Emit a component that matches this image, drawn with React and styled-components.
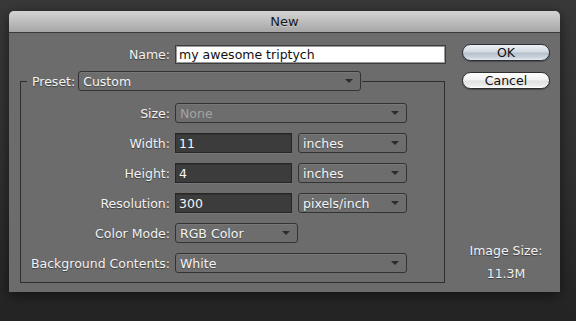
import React from 'react';
import styled, { createGlobalStyle } from 'styled-components';

const Global = createGlobalStyle`
  html, body { margin: 0; padding: 0; }
  body {
    width: 576px;
    height: 321px;
    overflow: hidden;
    background: linear-gradient(180deg, #393939 0%, #303030 55%, #242424 100%);
    font-family: "DejaVu Sans", "Liberation Sans", sans-serif;
  }
`;

const Page = styled.div`
  padding: 11px 0 0 9px;
`;

const Dialog = styled.div`
  width: 551px;
  height: 281px;
  display: flex;
  flex-direction: column;
  background: #6c6c6c;
  border-radius: 5px 5px 0 0;
  box-shadow: 0 3px 14px rgba(0, 0, 0, 0.55);
  overflow: hidden;
`;

const TitleBar = styled.div`
  height: 21px;
  flex: none;
  border-bottom: 1px solid #3a3a3a;
  background: linear-gradient(180deg, #d4d4d4 0%, #bdbdbd 50%, #a6a6a6 100%);
  display: flex;
  align-items: center;
  justify-content: center;
  font-size: 13px;
  color: #151515;
  text-shadow: 0 1px 0 rgba(255, 255, 255, 0.35);
`;

const Body = styled.div`
  flex: 1;
  display: flex;
  gap: 16px;
  padding: 11px 10px 10px 11px;
`;

const LeftColumn = styled.div`
  width: 426px;
  display: flex;
  flex-direction: column;
`;

const Row = styled.div`
  display: flex;
  align-items: center;
  height: 20px;
`;

const Pair = styled.div`
  display: flex;
  align-items: center;
  gap: 6px;
`;

const Label = styled.span`
  width: ${p => p.$width}px;
  margin-right: 5px;
  flex: none;
  text-align: right;
  font-size: 12.5px;
  color: #f3f3f3;
  text-shadow: 0 1px 1px rgba(0, 0, 0, 0.45);
  white-space: nowrap;
`;

const TextField = styled.div`
  box-sizing: border-box;
  width: ${p => p.$width}px;
  height: ${p => (p.$light ? 19 : 20)}px;
  padding-left: 3px;
  display: flex;
  align-items: center;
  font-size: 12.5px;
  border: 1px solid ${p => (p.$light ? '#3c3c3c' : '#262626')};
  background: ${p => (p.$light ? '#ffffff' : '#3c3c3c')};
  color: ${p => (p.$light ? '#111' : '#f5f5f5')};
  box-shadow: ${p =>
    p.$light
      ? 'inset 0 0 0 1px #9a9a9a'
      : 'inset 0 1px 0 #303030, 0 1px 0 rgba(255,255,255,0.08)'};
  white-space: nowrap;
`;

const Select = styled.div`
  position: relative;
  box-sizing: border-box;
  width: ${p => p.$width}px;
  height: 20px;
  padding-left: 4px;
  display: flex;
  align-items: center;
  font-size: 12.5px;
  border: 1px solid #333;
  border-radius: 3px;
  background: #6d6d6d;
  box-shadow: inset 0 1px 0 rgba(255, 255, 255, 0.07);
  color: ${p => (p.$disabled ? '#a3a3a3' : '#f5f5f5')};
  text-shadow: ${p => (p.$disabled ? 'none' : '0 1px 1px rgba(0,0,0,0.35)')};
  white-space: nowrap;

  &::after {
    content: '';
    position: absolute;
    right: 7px;
    top: 7px;
    border-left: 4px solid transparent;
    border-right: 4px solid transparent;
    border-top: 4px solid #2c2c2c;
  }
`;

const Group = styled.fieldset`
  box-sizing: border-box;
  width: 425px;
  margin: 7px 0 0 0;
  padding: 12px 0 9px 0;
  border: 1px solid #2e2e2e;
  display: flex;
  flex-direction: column;
  gap: 10px;
  min-width: 0;
`;

const Legend = styled.legend`
  margin-left: 6px;
  padding: 0 1px 0 5px;
  height: 20px;
  display: flex;
  align-items: center;
  gap: 3px;
`;

const LegendText = styled.span`
  font-size: 12.5px;
  color: #f3f3f3;
  text-shadow: 0 1px 1px rgba(0, 0, 0, 0.45);
`;

const RightColumn = styled.div`
  width: 88px;
  display: flex;
  flex-direction: column;
  gap: 11px;
`;

const Button = styled.button`
  box-sizing: border-box;
  width: 88px;
  height: 17px;
  padding: 0;
  border-radius: 9px;
  border: 1px solid ${p => (p.$primary ? '#29303a' : '#2e2e2e')};
  font-family: inherit;
  font-size: 12.5px;
  line-height: 15px;
  color: #111;
  background: ${p =>
    p.$primary
      ? 'linear-gradient(180deg, #eef2f6 0%, #d3dae2 45%, #b7c1cc 55%, #cdd5de 85%, #e6ebf0 100%)'
      : 'linear-gradient(180deg, #ffffff 0%, #f2f2f2 45%, #e0e0e0 55%, #ececec 85%, #ffffff 100%)'};
  box-shadow: 0 1px 1px rgba(0, 0, 0, 0.3);
`;

const ImageSize = styled.div`
  margin-top: auto;
  padding-bottom: 1px;
  display: flex;
  flex-direction: column;
  align-items: center;
  gap: 7px;
  font-size: 12.5px;
  line-height: 16px;
  color: #f3f3f3;
  text-shadow: 0 1px 1px rgba(0, 0, 0, 0.45);
`;

export default function App() {
  return (
    <>
      <Global />
      <Page>
        <Dialog>
          <TitleBar>New</TitleBar>
          <Body>
            <LeftColumn>
              <Row>
                <Label $width={150}>Name:</Label>
                <TextField $light $width={271}>my awesome triptych</TextField>
              </Row>
              <Group>
                <Legend>
                  <LegendText>Preset:</LegendText>
                  <Select $width={283}>Custom</Select>
                </Legend>
                <Row>
                  <Label $width={149}>Size:</Label>
                  <Select $disabled $width={232}>None</Select>
                </Row>
                <Row>
                  <Label $width={149}>Width:</Label>
                  <Pair>
                    <TextField $width={117}>11</TextField>
                    <Select $width={109}>inches</Select>
                  </Pair>
                </Row>
                <Row>
                  <Label $width={149}>Height:</Label>
                  <Pair>
                    <TextField $width={117}>4</TextField>
                    <Select $width={109}>inches</Select>
                  </Pair>
                </Row>
                <Row>
                  <Label $width={149}>Resolution:</Label>
                  <Pair>
                    <TextField $width={117}>300</TextField>
                    <Select $width={109}>pixels/inch</Select>
                  </Pair>
                </Row>
                <Row>
                  <Label $width={149}>Color Mode:</Label>
                  <Select $width={123}>RGB Color</Select>
                </Row>
                <Row>
                  <Label $width={149}>Background Contents:</Label>
                  <Select $width={232}>White</Select>
                </Row>
              </Group>
            </LeftColumn>
            <RightColumn>
              <Button $primary>OK</Button>
              <Button>Cancel</Button>
              <ImageSize>
                <span>Image Size:</span>
                <span>11.3M</span>
              </ImageSize>
            </RightColumn>
          </Body>
        </Dialog>
      </Page>
    </>
  );
}
